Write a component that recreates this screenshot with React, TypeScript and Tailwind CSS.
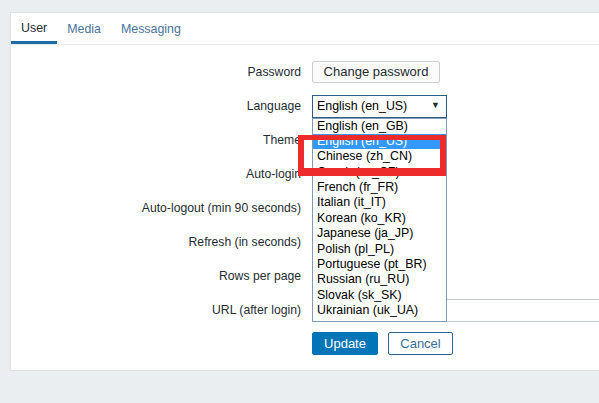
import React from 'react';

const languages = [
	'English (en_GB)',
	'English (en_US)',
	'Chinese (zh_CN)',
	'Czech (cs_CZ)',
	'French (fr_FR)',
	'Italian (it_IT)',
	'Korean (ko_KR)',
	'Japanese (ja_JP)',
	'Polish (pl_PL)',
	'Portuguese (pt_BR)',
	'Russian (ru_RU)',
	'Slovak (sk_SK)',
	'Ukrainian (uk_UA)',
];

const Row: React.FC<{ label: string; children?: React.ReactNode }> = ({ label, children }) => (
	<div className="flex items-center h-[24px]">
		<div className="w-[290px] text-right text-[12.2px] text-[#1f2c33] shrink-0">{label}</div>
		<div className="ml-[11px] flex items-center gap-[8px]">{children}</div>
	</div>
);

const textInput = 'h-[23px] border border-[#c3c9cd] bg-white px-[4px] text-[12.4px] text-[#1f2c33] outline-none';

const App: React.FC = () => {
	return (
		<div className="min-h-[403px] bg-[#ebeef0] pt-[12px] pl-[10px] font-['Liberation_Sans',Arial,sans-serif]">
			<div className="bg-white border-t border-l border-b border-[#dde2e5] overflow-hidden pb-[15px]">
				{/* tabs */}
				<div className="flex h-[32px] border-b border-[#e8ecee]">
					<div className="h-[31px] px-[10px] pt-[2px] flex items-center border-b-[3px] border-[#1d6aa5] text-[12.4px] text-[#1f2c33]">
						User
					</div>
					<div className="h-[31px] px-[10px] pt-[2px] flex items-center text-[12.4px] text-[#4b74a0]">Media</div>
					<div className="h-[31px] px-[10px] pt-[2px] flex items-center text-[12.4px] text-[#4b74a0]">Messaging</div>
				</div>

				<form className="flex flex-col gap-[10px] pt-[15px]">
					<Row label="Password">
						<button type="button" className="h-[22px] w-[128px] border border-[#c8ced2] bg-[#fbfbfb] rounded-[2px] text-[13px] text-[#1f2c33]">
							Change password
						</button>
					</Row>
					<Row label="Language">
						<div className="relative">
							<div className="h-[23px] w-[135px] border border-[#2c5d88] bg-white pl-[4px] pr-[6px] flex items-center justify-between text-[12.4px] text-black">
								<span>English (en_US)</span>
								<span className="text-[9px] text-[#1f2c33]">▼</span>
							</div>
							{/* open dropdown list */}
							<div className="absolute left-0 top-full z-10 w-[135px] border border-[#7f9db9] bg-white pb-[2px]">
								{languages.map((lang) => (
									<div
										key={lang}
										className={
											lang === 'English (en_US)'
												? 'h-[15.4px] leading-[15.4px] pl-[4px] text-[12.4px] bg-[#3399ff] text-white'
												: 'h-[15.4px] leading-[15.4px] pl-[4px] text-[12.4px] text-black'
										}
									>
										{lang}
									</div>
								))}
							</div>
							{/* annotation box */}
							<div className="absolute z-20 left-[-14px] top-[40px] w-[148px] h-[41px] border-x-[6px] border-t-[5px] border-b-[8px] border-[#ee2b2b]" />
						</div>
					</Row>
					<Row label="Theme">
						<div className="h-[23px] w-[135px] border border-[#c3c9cd]" />
					</Row>
					<Row label="Auto-login">
						<input type="checkbox" className="w-[14px] h-[14px]" />
					</Row>
					<Row label="Auto-logout (min 90 seconds)">
						<input type="checkbox" className="w-[14px] h-[14px]" />
						<input className={textInput + ' w-[60px]'} />
					</Row>
					<Row label="Refresh (in seconds)">
						<input className={textInput + ' w-[60px]'} />
					</Row>
					<Row label="Rows per page">
						<input className={textInput + ' w-[60px]'} />
					</Row>
					<Row label="URL (after login)">
						<input className={textInput + ' w-[453px] border-[#bfc5c9]'} />
					</Row>
					<div className="flex gap-[10px] pl-[301px] h-[23px]">
						<button type="button" className="w-[66px] h-[23px] bg-[#0275b8] border border-[#0275b8] rounded-[2px] text-[13px] text-white">
							Update
						</button>
						<button type="button" className="w-[65px] h-[23px] bg-white border border-[#2a6595] rounded-[2px] text-[13px] text-[#3a6d96]">
							Cancel
						</button>
					</div>
				</form>
			</div>
		</div>
	);
};

export default App;
